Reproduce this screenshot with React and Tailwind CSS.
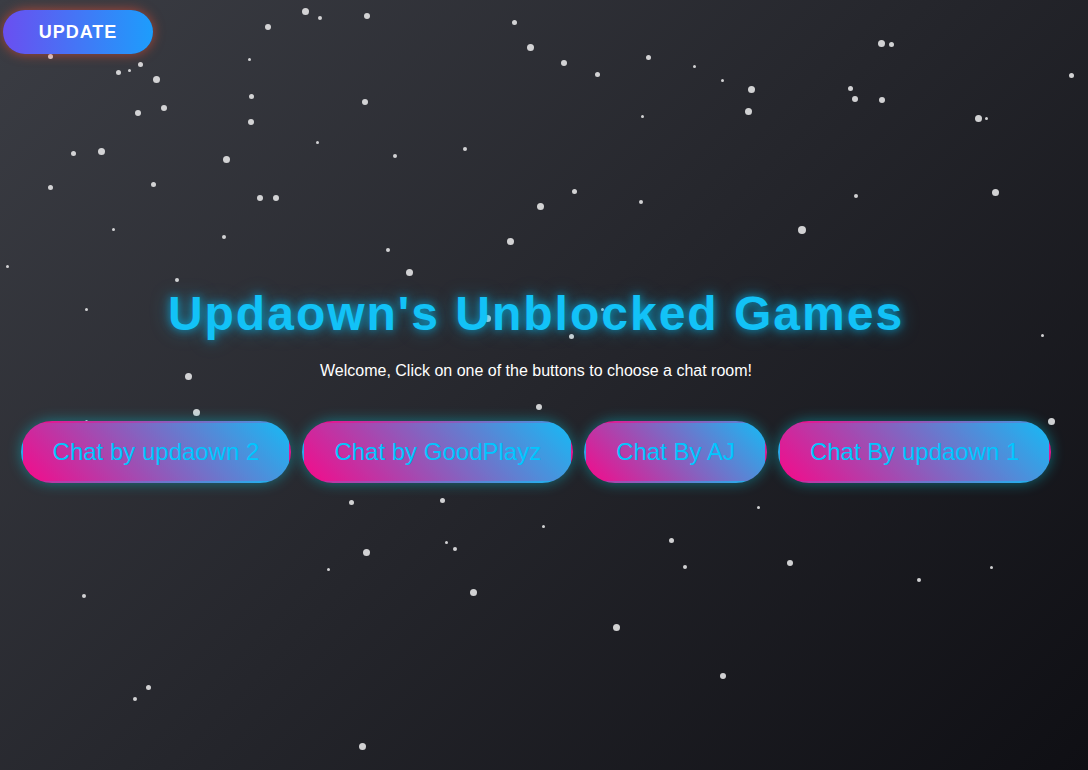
import React from "react";

const stars = [
  [305, 11, 7], [320, 18, 4], [367, 16, 6], [268, 27, 6], [249, 59, 3], [50, 56, 5],
  [118, 72, 5], [129, 70, 3], [140, 64, 5], [156, 79, 7], [138, 113, 6], [164, 108, 6],
  [251, 96, 5], [251, 122, 6], [365, 102, 6], [317, 142, 3], [226, 159, 7], [73, 153, 5],
  [101, 151, 7], [50, 187, 5], [153, 184, 5], [260, 198, 6], [276, 198, 6], [113, 229, 3],
  [224, 237, 4], [7, 266, 3], [177, 280, 4], [86, 309, 3], [188, 376, 7], [196, 412, 7],
  [86, 421, 3], [388, 250, 4], [409, 272, 7], [395, 156, 4], [465, 149, 4], [510, 241, 7],
  [540, 206, 7], [574, 191, 5], [641, 202, 4], [514, 22, 5], [530, 47, 7], [564, 63, 6],
  [597, 74, 5], [648, 57, 5], [694, 66, 3], [722, 80, 3], [751, 89, 7], [748, 111, 7],
  [642, 116, 3], [802, 230, 8], [856, 196, 4], [850, 88, 5], [855, 99, 6], [882, 100, 6],
  [881, 43, 7], [891, 44, 5], [978, 118, 7], [986, 118, 3], [1071, 75, 5], [995, 192, 7],
  [1042, 335, 3], [1051, 421, 7], [487, 318, 7], [571, 336, 5], [539, 407, 6], [351, 502, 5],
  [442, 500, 5], [543, 526, 3], [446, 542, 3], [455, 549, 4], [366, 552, 7], [328, 569, 3],
  [473, 592, 7], [616, 627, 7], [671, 540, 5], [685, 567, 4], [758, 507, 3], [790, 563, 6],
  [919, 580, 4], [991, 567, 3], [84, 596, 4], [148, 687, 5], [135, 699, 4], [723, 676, 6],
  [362, 746, 7], [602, 309, 3],
];

const rooms = ["Chat by updaown 2", "Chat by GoodPlayz", "Chat By AJ", "Chat By updaown 1"];

export default function App() {
  return (
    <div className="relative w-[1088px] h-[770px] overflow-hidden bg-linear-135/srgb from-[#3b3d44] to-[#0f0f14] font-['Liberation_Sans',Arial,sans-serif]">
      {stars.map(([x, y, s], i) => (
        <span
          key={i}
          className="absolute rounded-full bg-[#e4e4e6] opacity-90"
          style={{ left: x - s / 2, top: y - s / 2, width: s, height: s }}
        />
      ))}

      <button className="absolute left-[3px] top-[10px] w-[150px] h-[44px] rounded-full bg-linear-to-r/srgb from-[#6a4ff0] to-[#1d9dfc] text-white font-bold text-[18px] tracking-[1px] shadow-[0_0_12px_rgba(255,80,50,0.6)]">
        UPDATE
      </button>

      <div className="relative w-[1072px] pt-[285px] flex flex-col items-center">
        <h1 className="text-[48px] leading-[58px] font-bold tracking-[2px] text-[#12c2f7] [text-shadow:0_0_10px_rgba(0,198,255,0.7),0_0_20px_rgba(0,198,255,0.4)]">
          Updaown's Unblocked Games
        </h1>
        <p className="mt-[18px] text-white text-[16px] leading-[20px]">
          Welcome, Click on one of the buttons to choose a chat room!
        </p>
        <div className="mt-[40px] flex gap-[11px]">
          {rooms.map((r) => (
            <button
              key={r}
              className="px-[30px] py-[15px] border-2 border-transparent rounded-[32px] bg-linear-45/srgb from-[#f50a8a] to-[#16baf5] text-[#00c6ff] text-[24px] leading-[28px] shadow-[0_0_14px_rgba(0,210,230,0.45)]"
            >
              {r}
            </button>
          ))}
        </div>
      </div>
    </div>
  );
}
